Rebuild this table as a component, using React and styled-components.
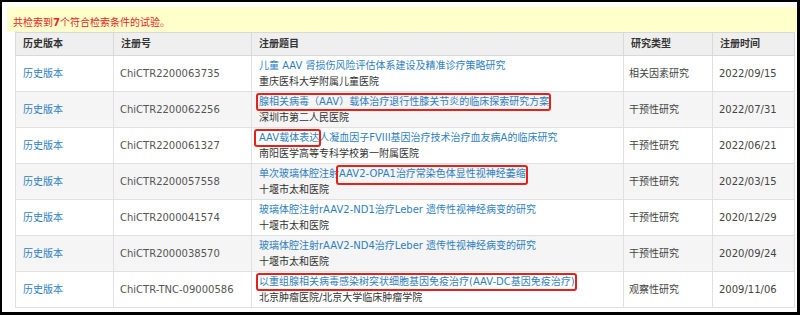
import React from "react";
import styled, { createGlobalStyle } from "styled-components";

const Global = createGlobalStyle`
  html, body { margin: 0; padding: 0; background: #fff; }
  body { font-family: "DejaVu Sans", "Noto Sans CJK SC", sans-serif; font-size: 10px; }
  * { box-sizing: border-box; }
`;

const Frame = styled.div`
  width: 800px;
  height: 315px;
  border-style: solid;
  border-color: #000;
  border-width: 2px 3px 3px 2px;
  background: #fff;
  padding: 5px 0 0 5px;
  overflow: hidden;
`;

const Banner = styled.div`
  height: 25px;
  background: #ffffcc;
  padding: 9px 0 0 6px;
  line-height: 14px;
  color: #e8271c;
  font-size: 10px;
`;

const Strong = styled.b`
  font-weight: bold;
`;

const Table = styled.table`
  margin-left: 8px;
  width: 779px;
  table-layout: fixed;
  border-collapse: collapse;
  border: 1px solid #d9d9d9;
`;

const Th = styled.th`
  height: 23px;
  background: #efefef;
  color: #333;
  font-weight: bold;
  text-align: left;
  padding: 0 7px;
  border: 1px solid #d9d9d9;
  line-height: 14px;
`;

const Row = styled.tr`
  height: 36px;
  background: ${(p) => (p.$alt ? "#f5f5f5" : "#fff")};
`;

const Td = styled.td`
  padding: 0 7px 0 ${(p) => p.$pl ?? 7}px;
  border: 1px solid #e0e0e0;
  color: ${(p) => p.$color || "#444"};
  line-height: 16px;
  vertical-align: middle;
  white-space: nowrap;
  overflow: visible;
`;

const Link = styled.a`
  color: #2f7fc0;
  text-decoration: none;
`;

const Org = styled.div`
  color: #333;
`;

const Mark = styled.span`
  position: relative;
  display: inline-block;
  &::after {
    content: "";
    position: absolute;
    top: -1px;
    bottom: ${(p) => p.$b ?? -1}px;
    left: ${(p) => p.$l ?? -3}px;
    right: -2px;
    border: 2px solid #e8201a;
    border-radius: 3px;
    pointer-events: none;
  }
`;

const rows = [
  {
    id: "ChiCTR2200063735",
    title: [{ t: "儿童 AAV 肾损伤风险评估体系建设及精准诊疗策略研究" }],
    org: "重庆医科大学附属儿童医院",
    type: "相关因素研究",
    date: "2022/09/15",
  },
  {
    id: "ChiCTR2200062256",
    title: [{ t: "腺相关病毒（AAV）载体治疗退行性膝关节炎的临床探索研究方案", hl: true }],
    org: "深圳市第二人民医院",
    type: "干预性研究",
    date: "2022/07/31",
  },
  {
    id: "ChiCTR2200061327",
    title: [{ t: "AAV载体表达", hl: true, l: -5 }, { t: "人凝血因子FVIII基因治疗技术治疗血友病A的临床研究" }],
    org: "南阳医学高等专科学校第一附属医院",
    type: "干预性研究",
    date: "2022/06/21",
  },
  {
    id: "ChiCTR2200057558",
    title: [{ t: "单次玻璃体腔注射" }, { t: "AAV2-OPA1治疗常染色体显性视神经萎缩", hl: true, b: -3 }],
    org: "十堰市太和医院",
    type: "干预性研究",
    date: "2022/03/15",
  },
  {
    id: "ChiCTR2000041574",
    title: [{ t: "玻璃体腔注射rAAV2-ND1治疗Leber 遗传性视神经病变的研究" }],
    org: "十堰市太和医院",
    type: "干预性研究",
    date: "2020/12/29",
  },
  {
    id: "ChiCTR2000038570",
    title: [{ t: "玻璃体腔注射rAAV2-ND4治疗Leber 遗传性视神经病变的研究" }],
    org: "十堰市太和医院",
    type: "干预性研究",
    date: "2020/09/24",
  },
  {
    id: "ChiCTR-TNC-09000586",
    title: [{ t: "以重组腺相关病毒感染树突状细胞基因免疫治疗(AAV-DC基因免疫治疗)", hl: true }],
    org: "北京肿瘤医院/北京大学临床肿瘤学院",
    type: "观察性研究",
    date: "2009/11/06",
  },
];

export default function App() {
  return (
    <>
      <Global />
      <Frame>
        <Banner>
          共检索到<Strong>7</Strong>个符合检索条件的试验。
        </Banner>
        <Table>
          <colgroup>
            <col style={{ width: 98 }} />
            <col style={{ width: 138 }} />
            <col style={{ width: 372 }} />
            <col style={{ width: 89 }} />
            <col style={{ width: 82 }} />
          </colgroup>
          <thead>
            <tr>
              <Th>历史版本</Th>
              <Th>注册号</Th>
              <Th>注册题目</Th>
              <Th>研究类型</Th>
              <Th>注册时间</Th>
            </tr>
          </thead>
          <tbody>
            {rows.map((r, i) => (
              <Row key={r.id} $alt={i % 2 === 1}>
                <Td>
                  <Link href="#">历史版本</Link>
                </Td>
                <Td $color="#555" $pl={6}>{r.id}</Td>
                <Td>
                  <div>
                    <Link href="#">
                      {r.title.map((s, j) =>
                        s.hl ? (
                          <Mark key={j} $l={s.l} $b={s.b}>{s.t}</Mark>
                        ) : (
                          <React.Fragment key={j}>{s.t}</React.Fragment>
                        )
                      )}
                    </Link>
                  </div>
                  <Org>{r.org}</Org>
                </Td>
                <Td $pl={5}>{r.type}</Td>
                <Td $pl={6}>{r.date}</Td>
              </Row>
            ))}
          </tbody>
        </Table>
      </Frame>
    </>
  );
}
